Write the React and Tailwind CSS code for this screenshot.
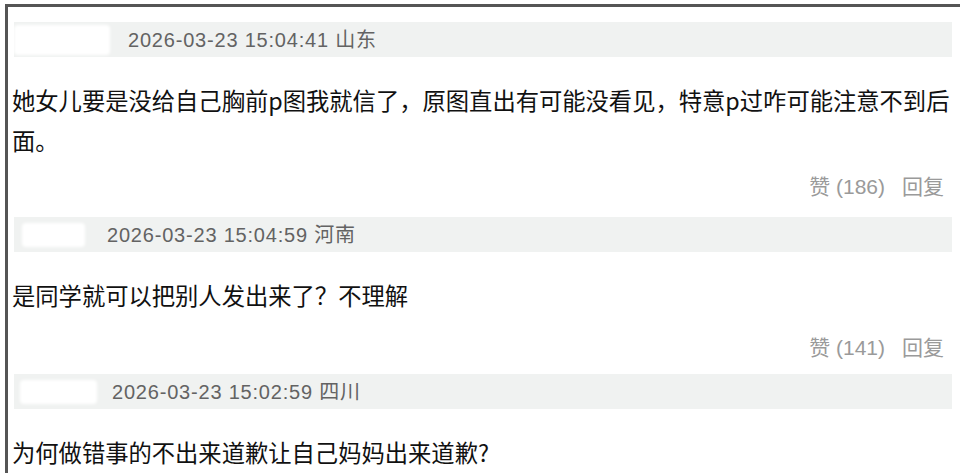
import React from "react";

const comments = [
  {
    blob: "ml-0 w-[96px] h-[30px]",
    gap: "ml-[18px]",
    time: "2026-03-23 15:04:41 山东",
    text: "她女儿要是没给自己胸前p图我就信了，原图直出有可能没看见，特意p过咋可能注意不到后面。",
    likes: "186",
    actions: true,
    top: "mt-[15px]",
    actTop: "mt-[12px]",
  },
  {
    blob: "ml-[8px] w-[63px] h-[24px]",
    gap: "ml-[22px]",
    time: "2026-03-23 15:04:59 河南",
    text: "是同学就可以把别人发出来了？不理解",
    likes: "141",
    actions: true,
    top: "mt-[15px]",
    actTop: "mt-[18px]",
  },
  {
    blob: "ml-[6px] w-[77px] h-[24px]",
    gap: "ml-[15px]",
    time: "2026-03-23 15:02:59 四川",
    text: "为何做错事的不出来道歉让自己妈妈出来道歉?",
    likes: "",
    actions: false,
    top: "mt-[11px]",
    actTop: "",
  },
];

export default function App() {
  return (
    <div
      className="w-[960px] h-[473px] bg-white overflow-hidden"
      style={{ fontFamily: '"Liberation Sans", "Noto Sans CJK SC", sans-serif' }}
    >
      <div className="ml-[5px] mt-[4px] h-[480px] border-l-[3px] border-t-[3px] border-[#555555]">
        {comments.map((c, i) => (
          <div key={i} className={c.top}>
            <div className="ml-[6px] w-[938px] h-[35px] bg-[#f0f2f1] flex items-center">
              <div className={`${c.blob} bg-white rounded-sm blur-[1.5px]`} />
              <span className={`${c.gap} text-[20px] tracking-[0.8px] text-[#636363] leading-none`}>
                {c.time}
              </span>
            </div>
            <p
              className="mt-[23px] pl-[4px] text-[23.3px] leading-[40px] text-[#111111]"
              style={{ fontFamily: '"Noto Sans CJK SC", sans-serif' }}
            >
              {c.text}
            </p>
            {c.actions && (
              <div className={`${c.actTop} h-[30px] flex items-center justify-end pr-[16px] text-[21px] text-[#9a9a9a]`}>
                <span>赞 ({c.likes})</span>
                <span className="ml-[17px]">回复</span>
              </div>
            )}
          </div>
        ))}
      </div>
    </div>
  );
}
